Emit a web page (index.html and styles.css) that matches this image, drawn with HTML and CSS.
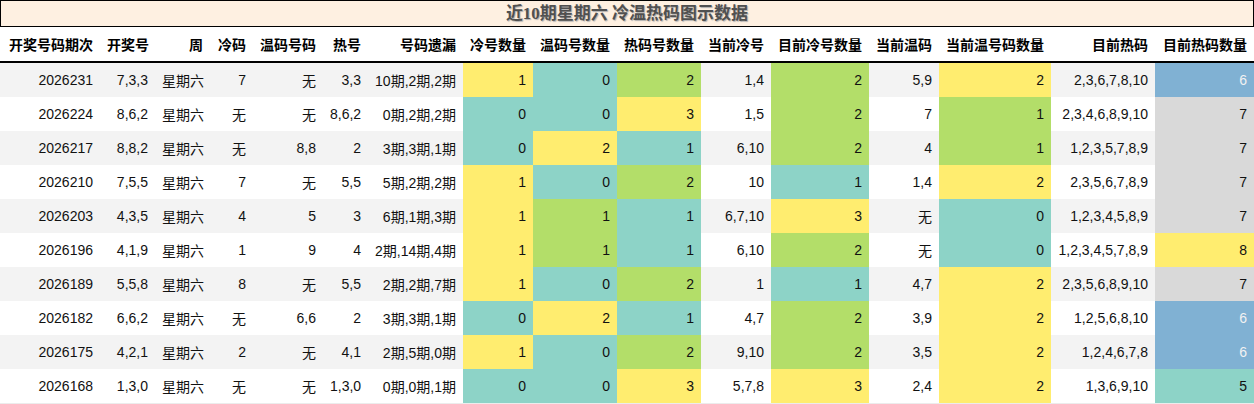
FILE: index.html
```html
<!DOCTYPE html>
<html lang="zh">
<head>
<meta charset="utf-8">
<title>近10期星期六 冷温热码图示数据</title>
<link rel="stylesheet" href="styles.css">
</head>
<body>
<div class="title">近10期星期六 冷温热码图示数据</div>
<table class="data">
  <colgroup>
    <col class="w100"><col class="w55"><col class="w55"><col class="w43"><col class="w70"><col class="w45"><col class="w95"><col class="w70"><col class="w84"><col class="w84"><col class="w70"><col class="w98"><col class="w70"><col class="w112"><col class="w104"><col class="w99">
  </colgroup>
  <thead>
    <tr>
      <th>开奖号码期次</th><th>开奖号</th><th>周</th><th>冷码</th><th>温码号码</th><th>热号</th><th>号码遗漏</th><th>冷号数量</th><th>温码号数量</th><th>热码号数量</th><th>当前冷号</th><th>目前冷号数量</th><th>当前温码</th><th>当前温号码数量</th><th>目前热码</th><th>目前热码数量</th>
    </tr>
  </thead>
  <tbody>
    <tr><td>2026231</td><td>7,3,3</td><td>星期六</td><td>7</td><td>无</td><td>3,3</td><td>10期,2期,2期</td><td class="y">1</td><td class="t">0</td><td class="g">2</td><td>1,4</td><td class="g">2</td><td>5,9</td><td class="y">2</td><td>2,3,6,7,8,10</td><td class="b">6</td></tr>
    <tr><td>2026224</td><td>8,6,2</td><td>星期六</td><td>无</td><td>无</td><td>8,6,2</td><td>0期,2期,2期</td><td class="t">0</td><td class="t">0</td><td class="y">3</td><td>1,5</td><td class="g">2</td><td>7</td><td class="g">1</td><td>2,3,4,6,8,9,10</td><td class="n">7</td></tr>
    <tr><td>2026217</td><td>8,8,2</td><td>星期六</td><td>无</td><td>8,8</td><td>2</td><td>3期,3期,1期</td><td class="t">0</td><td class="y">2</td><td class="t">1</td><td>6,10</td><td class="g">2</td><td>4</td><td class="g">1</td><td>1,2,3,5,7,8,9</td><td class="n">7</td></tr>
    <tr><td>2026210</td><td>7,5,5</td><td>星期六</td><td>7</td><td>无</td><td>5,5</td><td>5期,2期,2期</td><td class="y">1</td><td class="t">0</td><td class="g">2</td><td>10</td><td class="t">1</td><td>1,4</td><td class="y">2</td><td>2,3,5,6,7,8,9</td><td class="n">7</td></tr>
    <tr><td>2026203</td><td>4,3,5</td><td>星期六</td><td>4</td><td>5</td><td>3</td><td>6期,1期,3期</td><td class="y">1</td><td class="g">1</td><td class="t">1</td><td>6,7,10</td><td class="y">3</td><td>无</td><td class="t">0</td><td>1,2,3,4,5,8,9</td><td class="n">7</td></tr>
    <tr><td>2026196</td><td>4,1,9</td><td>星期六</td><td>1</td><td>9</td><td>4</td><td>2期,14期,4期</td><td class="y">1</td><td class="g">1</td><td class="t">1</td><td>6,10</td><td class="g">2</td><td>无</td><td class="t">0</td><td>1,2,3,4,5,7,8,9</td><td class="y">8</td></tr>
    <tr><td>2026189</td><td>5,5,8</td><td>星期六</td><td>8</td><td>无</td><td>5,5</td><td>2期,2期,7期</td><td class="y">1</td><td class="t">0</td><td class="g">2</td><td>1</td><td class="t">1</td><td>4,7</td><td class="y">2</td><td>2,3,5,6,8,9,10</td><td class="n">7</td></tr>
    <tr><td>2026182</td><td>6,6,2</td><td>星期六</td><td>无</td><td>6,6</td><td>2</td><td>3期,3期,1期</td><td class="t">0</td><td class="y">2</td><td class="t">1</td><td>4,7</td><td class="g">2</td><td>3,9</td><td class="y">2</td><td>1,2,5,6,8,10</td><td class="b">6</td></tr>
    <tr><td>2026175</td><td>4,2,1</td><td>星期六</td><td>2</td><td>无</td><td>4,1</td><td>2期,5期,0期</td><td class="y">1</td><td class="t">0</td><td class="g">2</td><td>9,10</td><td class="g">2</td><td>3,5</td><td class="y">2</td><td>1,2,4,6,7,8</td><td class="b">6</td></tr>
    <tr><td>2026168</td><td>1,3,0</td><td>星期六</td><td>无</td><td>无</td><td>1,3,0</td><td>0期,0期,1期</td><td class="t">0</td><td class="t">0</td><td class="y">3</td><td>5,7,8</td><td class="y">3</td><td>2,4</td><td class="y">2</td><td>1,3,6,9,10</td><td class="t">5</td></tr>
  </tbody>
</table>
</body>
</html>
```

FILE: styles.css
```css
html, body {
  margin: 0;
  padding: 0;
  background: #ffffff;
}

body {
  width: 1254px;
  font-family: "Liberation Sans", "Noto Sans CJK SC", sans-serif;
  color: #111;
}

.title {
  box-sizing: border-box;
  height: 27px;
  border: 1px solid #000;
  background: #fef0e1;
  text-align: center;
  font-family: "Liberation Serif", "Noto Sans CJK SC", serif;
  font-weight: bold;
  font-size: 17px;
  line-height: 25px;
  color: #505050;
  text-shadow: 1px 1px 1px #b0b0b0;
}

.data {
  width: 1254px;
  table-layout: fixed;
  border-collapse: collapse;
  font-size: 14px;
}

.w43 { width: 43px; }
.w45 { width: 45px; }
.w55 { width: 55px; }
.w70 { width: 70px; }
.w84 { width: 84px; }
.w95 { width: 95px; }
.w98 { width: 98px; }
.w99 { width: 99px; }
.w100 { width: 100px; }
.w104 { width: 104px; }
.w112 { width: 112px; }

.data th,
.data td {
  padding: 0 7px;
  text-align: right;
  white-space: nowrap;
  overflow: hidden;
}

.data th {
  height: 34px;
  font-weight: bold;
  color: #000;
  border-bottom: 2px solid #000;
}

.data td {
  height: 34px;
  color: #111;
}

.data tbody tr:nth-child(odd) {
  background: #f3f3f3;
}

.data tbody tr:last-child td {
  border-bottom: 1px solid #ececec;
}

.data td.y { background: #ffed6f; }
.data td.t { background: #8dd3c7; }
.data td.g { background: #b3de69; }
.data td.b { background: #80b1d3; color: #f2f2f2; }
.data td.n { background: #d9d9d9; }
```
